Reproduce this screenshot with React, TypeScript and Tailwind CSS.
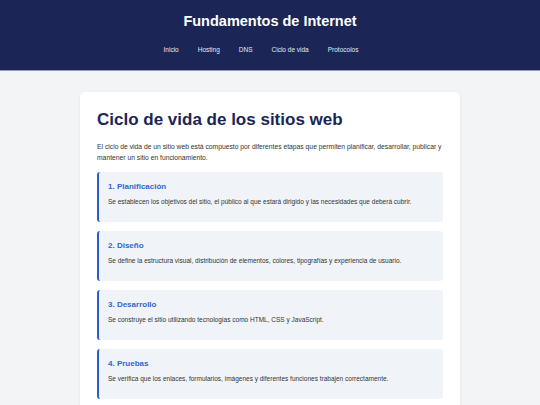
const links = ['Inicio', 'Hosting', 'DNS', 'Ciclo de vida', 'Protocolos'];

const steps = [
  {
    title: '1. Planificación',
    text: 'Se establecen los objetivos del sitio, el público al que estará dirigido y las necesidades que deberá cubrir.',
  },
  {
    title: '2. Diseño',
    text: 'Se define la estructura visual, distribución de elementos, colores, tipografías y experiencia de usuario.',
  },
  {
    title: '3. Desarrollo',
    text: 'Se construye el sitio utilizando tecnologías como HTML, CSS y JavaScript.',
  },
  {
    title: '4. Pruebas',
    text: 'Se verifica que los enlaces, formularios, imágenes y diferentes funciones trabajen correctamente.',
  },
];

function Step({ title, text }: { title: string; text: string }) {
  return (
    <div className="h-[50px] rounded-[3px] border-l-2 border-[#2c5cc5] bg-[#f0f4f9] pl-[9px] pr-[7px] pt-[9px]">
      <h3 className="text-[8px] font-bold leading-[11px] text-[#3066d0]">{title}</h3>
      <p className="mt-[5px] text-[6.5px] leading-[10px] text-[#333]">{text}</p>
    </div>
  );
}

export default function App() {
  return (
    <div className="min-h-[405px] bg-[#f3f4f6] font-['Liberation_Sans',Arial,sans-serif]">
      <header className="h-[71px] border-b border-[#8e99c0] bg-[#1b2657] pt-[12px] text-center">
        <h1 className="text-[14.5px] font-bold leading-[18px] text-white">Fundamentos de Internet</h1>
        <nav className="mt-[15px] flex justify-center gap-[19px] pr-[18px]">
          {links.map((l) => (
            <a key={l} className="text-[6.5px] leading-[10px] text-[#e4e8f2]">
              {l}
            </a>
          ))}
        </nav>
      </header>

      <main className="mx-auto mt-[21px] w-[380px] rounded-[5px] bg-white px-[17px] pb-[10px] pt-[16px] shadow-[0_1px_4px_rgba(0,0,0,0.06)]">
        <h2 className="text-[17px] font-bold leading-[24px] text-[#1b2657]">Ciclo de vida de los sitios web</h2>
        <p className="mt-[10px] text-[6.75px] leading-[10.5px] text-[#333]">
          El ciclo de vida de un sitio web está compuesto por diferentes etapas que permiten planificar, desarrollar, publicar y mantener un sitio en funcionamiento.
        </p>
        <div className="mt-[9px] flex flex-col gap-[9px]">
          {steps.map((s) => (
            <Step key={s.title} {...s} />
          ))}
        </div>
      </main>
    </div>
  );
}
